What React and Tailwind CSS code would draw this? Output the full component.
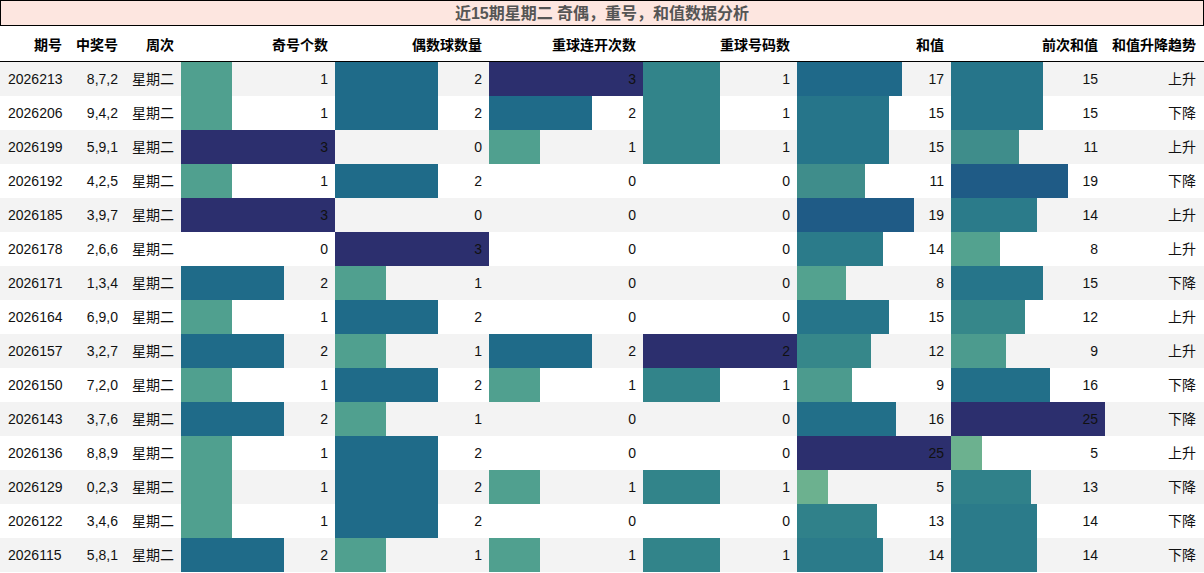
import React from 'react';

const rows = [
  ['2026213', '8,7,2', 1, 2, 3, 1, 17, 15, '上升'],
  ['2026206', '9,4,2', 1, 2, 2, 1, 15, 15, '下降'],
  ['2026199', '5,9,1', 3, 0, 1, 1, 15, 11, '上升'],
  ['2026192', '4,2,5', 1, 2, 0, 0, 11, 19, '下降'],
  ['2026185', '3,9,7', 3, 0, 0, 0, 19, 14, '上升'],
  ['2026178', '2,6,6', 0, 3, 0, 0, 14, 8, '上升'],
  ['2026171', '1,3,4', 2, 1, 0, 0, 8, 15, '下降'],
  ['2026164', '6,9,0', 1, 2, 0, 0, 15, 12, '上升'],
  ['2026157', '3,2,7', 2, 1, 2, 2, 12, 9, '上升'],
  ['2026150', '7,2,0', 1, 2, 1, 1, 9, 16, '下降'],
  ['2026143', '3,7,6', 2, 1, 0, 0, 16, 25, '下降'],
  ['2026136', '8,8,9', 1, 2, 0, 0, 25, 5, '上升'],
  ['2026129', '0,2,3', 1, 2, 1, 1, 5, 13, '下降'],
  ['2026122', '3,4,6', 1, 2, 0, 0, 13, 14, '下降'],
  ['2026115', '5,8,1', 2, 1, 1, 1, 14, 14, '下降'],
];

// crest-like colormap, sampled by eye
const stops = [
  [0.0, [165, 205, 144]],
  [0.2, [108, 177, 143]],
  [0.333, [80, 160, 143]],
  [0.44, [63, 141, 139]],
  [0.5, [50, 132, 138]],
  [0.56, [43, 123, 138]],
  [0.6, [38, 117, 138]],
  [0.667, [31, 107, 137]],
  [0.76, [31, 91, 134]],
  [0.88, [38, 70, 124]],
  [1.0, [44, 47, 110]],
];

function crest(t) {
  for (let i = 1; i < stops.length; i++) {
    const [t1, c1] = stops[i];
    const [t0, c0] = stops[i - 1];
    if (t <= t1) {
      const f = (t - t0) / (t1 - t0);
      const c = c0.map((v, k) => Math.round(v + (c1[k] - v) * f));
      return `rgb(${c[0]},${c[1]},${c[2]})`;
    }
  }
  return 'rgb(44,47,110)';
}

const barCols = [2, 3, 4, 5, 6, 7];
const maxes = barCols.map((c) => Math.max(...rows.map((r) => r[c])));

const font = { fontFamily: '"Liberation Sans", "Noto Sans CJK SC", sans-serif' };

function BarCell({ value, max }) {
  const pct = max ? (value / max) * 100 : 0;
  const bg = value > 0
    ? { background: `linear-gradient(90deg, ${crest(value / max)} ${pct}%, transparent ${pct}%)` }
    : undefined;
  return (
    <div className="w-[154px] h-full flex items-center justify-end pr-[7px]" style={bg}>
      {value}
    </div>
  );
}

export default function App() {
  return (
    <div className="w-[1204px] h-[573px] bg-white text-[14px] text-[#111]" style={font}>
      {/* Title */}
      <div className="h-[26px] border border-black bg-[#fde6e0] flex items-center justify-center pt-[2px] text-[16px] font-bold text-[#555]">
        近15期星期二 奇偶，重号，和值数据分析
      </div>

      {/* Header */}
      <div className="h-[36px] flex items-center pt-[3px] border-b border-black font-bold text-black">
        <div className="w-[70px] text-right pr-[8px]">期号</div>
        <div className="w-[55px] text-right pr-[7px]">中奖号</div>
        <div className="w-[56px] text-right pr-[7px]">周次</div>
        <div className="w-[154px] text-right pr-[7px]">奇号个数</div>
        <div className="w-[154px] text-right pr-[7px]">偶数球数量</div>
        <div className="w-[154px] text-right pr-[7px]">重球连开次数</div>
        <div className="w-[154px] text-right pr-[7px]">重球号码数</div>
        <div className="w-[154px] text-right pr-[7px]">和值</div>
        <div className="w-[154px] text-right pr-[7px]">前次和值</div>
        <div className="w-[99px] text-right pr-[8px]">和值升降趋势</div>
      </div>

      {/* Rows */}
      {rows.map((r, i) => (
        <div key={r[0]} className={`h-[34px] flex items-center ${i % 2 === 0 ? 'bg-[#f3f3f3]' : 'bg-white'}`}>
          <div className="w-[70px] pl-[8px]">{r[0]}</div>
          <div className="w-[55px] text-right pr-[7px]">{r[1]}</div>
          <div className="w-[56px] text-right pr-[7px]">星期二</div>
          {barCols.map((c, k) => (
            <BarCell key={c} value={r[c]} max={maxes[k]} />
          ))}
          <div className="w-[99px] text-right pr-[8px]">{r[8]}</div>
        </div>
      ))}
    </div>
  );
}
